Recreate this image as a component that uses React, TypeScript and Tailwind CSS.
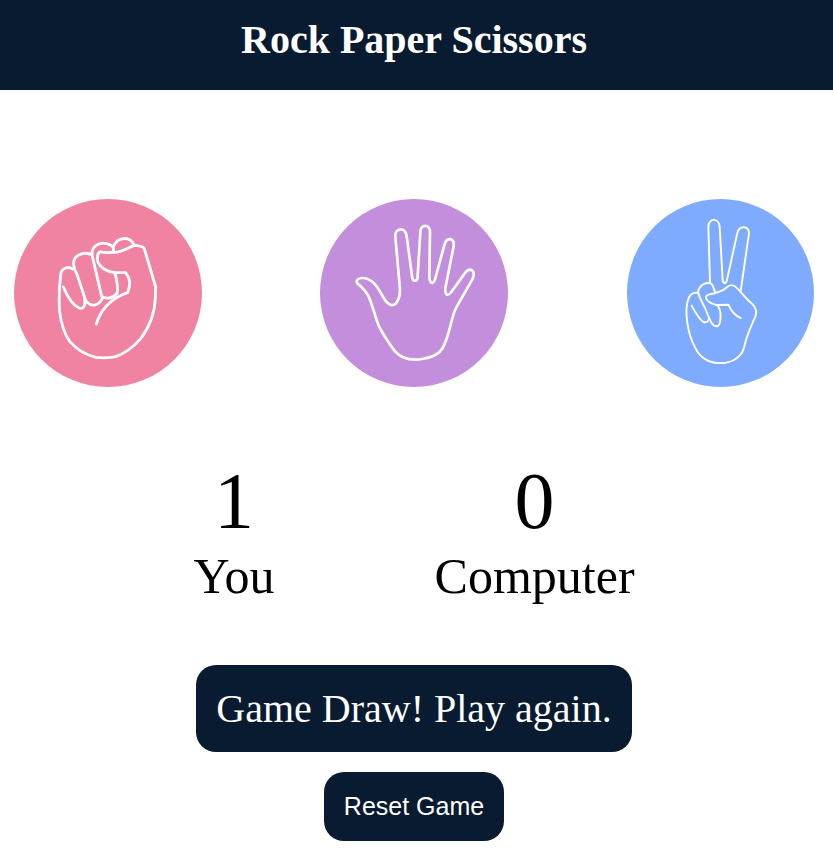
import { useState } from "react";
import type { ReactNode } from "react";

function Hand({
  label,
  color,
  viewBox,
  stroke,
  onPick,
  children,
}: {
  label: string;
  color: string;
  viewBox: string;
  stroke: number;
  onPick: () => void;
  children: ReactNode;
}) {
  return (
    <button
      aria-label={label}
      onClick={onPick}
      className={`h-[188px] shrink-0 overflow-hidden rounded-[50%] ${color}`}
    >
      <svg
        viewBox={viewBox}
        className="size-full"
        fill="none"
        stroke="white"
        strokeWidth={stroke}
        strokeLinecap="round"
        strokeLinejoin="round"
      >
        {children}
      </svg>
    </button>
  );
}

function Score({ value, name }: { value: number; name: string }) {
  return (
    <div className="text-center">
      <p className="text-[80px] leading-[92px]">{value}</p>
      <p className="text-[50px] leading-[59px]">{name}</p>
    </div>
  );
}

const names = ["Rock", "Paper", "Scissors"];

export default function App() {
  const [you, setYou] = useState(1);
  const [computer, setComputer] = useState(0);
  const [message, setMessage] = useState("Game Draw! Play again.");

  const play = (pick: number) => {
    const other = Math.floor(Math.random() * 3);
    if (pick === other) {
      setMessage("Game Draw! Play again.");
    } else if ((pick - other + 3) % 3 === 1) {
      setYou(you + 1);
      setMessage(`You win! ${names[pick]} beats ${names[other]}`);
    } else {
      setComputer(computer + 1);
      setMessage(`You lost. ${names[other]} beats ${names[pick]}`);
    }
  };

  const reset = () => {
    setYou(0);
    setComputer(0);
    setMessage("Play your move");
  };

  return (
    <div className="h-[853px] overflow-hidden bg-white font-['Liberation_Serif',serif] text-black">
      <header className="h-[90px] bg-[#081b31] pr-[5px] text-center text-white">
        <h1 className="text-[40px] leading-[79px] font-bold">Rock Paper Scissors</h1>
      </header>
      <main className="w-[828px]">
        <div className="flex gap-[118px] px-[14px] pt-[109px]">
          <Hand label="Rock" color="w-[188px] bg-[#f083a1]" viewBox="42 27 564 564" stroke={8.5} onPick={() => play(0)}>
            <path d="M217 237C206 228 183 234 182 254C178 290 176 330 179 365C183 398 192 430 209 454C232 480 262 496 288 502C308 504 330 504 347 500C378 489 401 470 422 446C446 414 465 373 466 322L467 291L433 176C427 166 414 168 402 166C387 172 366 187 343 187C329 187 313 190 302 185C291 188 291 202 294 217C303 235 322 245 344 248L377 248C392 267 392 283 383 308C335 323 302 359 289 402" />
            <path d="M190 291C199 312 214 344 237 354C248 358 257 353 254 326" />
            <path d="M272 193C256 186 218 191 221 225C222 235 226 244 231 253L257 331C270 352 295 350 307 325" />
            <path d="M340 184C343 172 336 165 319 161C297 155 274 170 276 194L305 319C316 328 338 326 350 311C358 301 350 272 345 249" />
            <path d="M340 170C353 140 388 137 402 164" />
          </Hand>
          <Hand label="Paper" color="w-[188px] bg-[#c38fdd]" viewBox="30 27 564 564" stroke={8} onPick={() => play(1)}>
            <path d="M269 287L256 140C254 113 287 109 290 139L306 258C308 277 323 277 323 257L331 127C330 101 361 102 360 126L358 259C359 285 372 284 377 261L402 169C409 137 435 143 431 169L406 294C405 316 413 320 424 306L465 249C481 230 499 242 487 268L439 352C423 381 420 435 398 474C386 495 366 503 336 507C304 512 275 506 255 484C238 461 221 436 207 409C196 383 190 355 180 329C171 304 156 291 142 280C136 270 147 263 159 264C190 265 207 298 221 324C231 342 246 351 257 341C270 326 271 304 269 287Z" />
          </Hand>
          <Hand label="Scissors" color="ml-px w-[187px] bg-[#7fabff]" viewBox="21 27 561 564" stroke={5.8} onPick={() => play(2)}>
            <path d="M270 278L265 111C265 81 298 84 299 111L308 270C310 284 318 282 321 269L352 129C357 107 386 105 387 130L362 303" />
            <path d="M234 306C238 283 262 274 275 282C281 288 281 298 286 307" />
            <path d="M235 309C217 304 206 318 203 334C194 365 202 430 225 472C241 506 270 519 295 519L318 518C350 511 367 497 373 469C379 438 393 409 406 380C411 368 409 354 396 341C380 329 367 310 350 293C338 282 330 283 319 293C308 303 295 308 266 314C250 319 258 337 290 345L325 344C333 362 344 377 362 384" />
            <path d="M215 347C225 366 237 387 250 396C259 399 266 395 267 385" />
            <path d="M234 306C239 329 252 343 260 366C268 387 272 399 281 406C291 412 299 407 300 396C304 376 302 361 294 348" />
          </Hand>
        </div>
        <section className="mt-[68px] flex justify-center gap-[160px]">
          <Score value={you} name="You" />
          <Score value={computer} name="Computer" />
        </section>
        <section className="mt-[59px] flex flex-col items-center gap-5">
          <p className="rounded-[20px] bg-[#081b31] p-5 text-[40px] leading-[47px] text-white">{message}</p>
          <button
            onClick={reset}
            className="rounded-[20px] bg-[#081b31] p-5 font-['Liberation_Sans',sans-serif] text-[25px] leading-[29px] text-white"
          >
            Reset Game
          </button>
        </section>
      </main>
    </div>
  );
}
